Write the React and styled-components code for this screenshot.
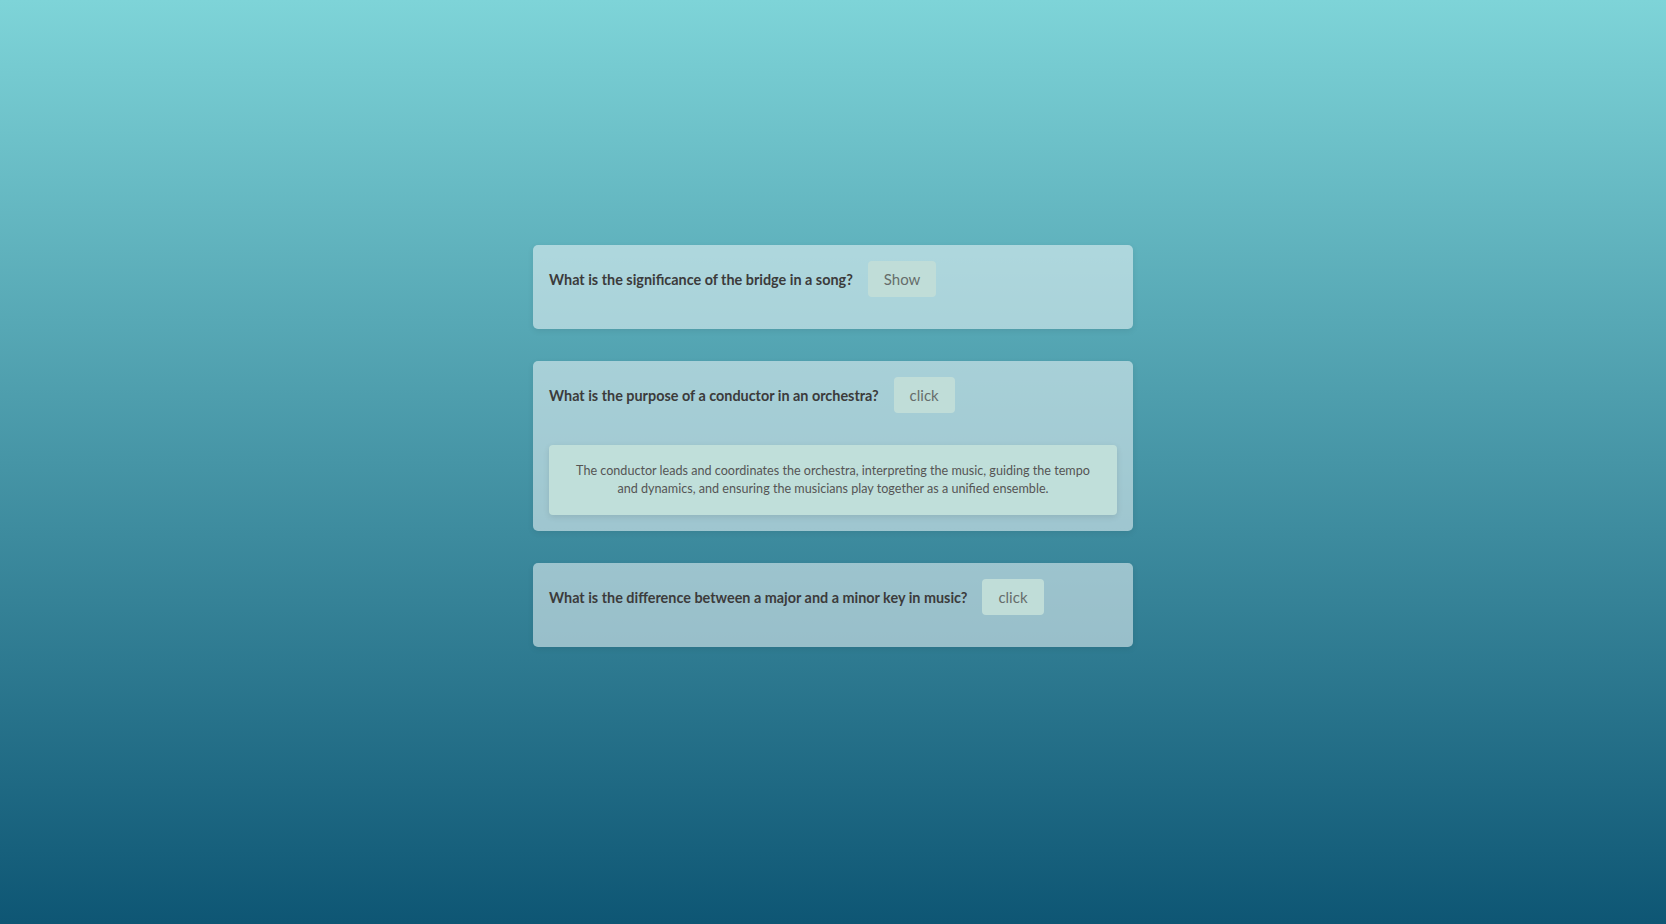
import styled, { createGlobalStyle } from 'styled-components'

const faqs = [
  {
    question: 'What is the significance of the bridge in a song?',
    label: 'Show',
    answer: null,
  },
  {
    question: 'What is the purpose of a conductor in an orchestra?',
    label: 'click',
    answer:
      'The conductor leads and coordinates the orchestra, interpreting the music, guiding the tempo and dynamics, and ensuring the musicians play together as a unified ensemble.',
  },
  {
    question: 'What is the difference between a major and a minor key in music?',
    label: 'click',
    answer: null,
  },
]

const App = () => {
  return (
    <>
      <GlobalStyle />
      <Page>
        <List>
          {faqs.map((item) => (
            <Card key={item.question}>
              <Row>
                <Question>{item.question}</Question>
                <Toggle>{item.label}</Toggle>
              </Row>
              {item.answer && <Answer>{item.answer}</Answer>}
            </Card>
          ))}
        </List>
      </Page>
    </>
  )
}
export default App

const GlobalStyle = createGlobalStyle`
  * {
    box-sizing: border-box;
  }

  body {
    margin: 0;
    font-family: 'Lato', 'Open Sans', sans-serif;
  }
`

const Page = styled.main`
  min-height: 100vh;
  display: flex;
  justify-content: center;
  align-items: center;
  background: linear-gradient(to bottom, #7ed4d8 0%, #0e5674 100%);
`

const List = styled.div`
  width: 600px;
  display: flex;
  flex-direction: column;
  gap: 32px;
  margin-top: -32px;
`

const Card = styled.section`
  display: flex;
  flex-direction: column;
  padding: 16px;
  background: rgba(238, 246, 247, 0.55);
  border-radius: 5px;
  box-shadow: 0 2px 6px rgba(0, 0, 0, 0.08);
`

const Row = styled.div`
  display: flex;
  align-items: center;
  gap: 15px;
  margin-bottom: 16px;
`

const Question = styled.h3`
  margin: 0;
  font-size: 14.4px;
  font-weight: 700;
  color: #3b3b3b;
`

const Toggle = styled.button`
  height: 36px;
  padding: 0 16px;
  border: none;
  border-radius: 4px;
  background: #c0ddd8;
  color: #666d6b;
  font-family: inherit;
  font-size: 15px;
  cursor: pointer;
`

const Answer = styled.p`
  margin: 16px 0 0;
  padding: 17px 16px;
  background: #c0dfda;
  border-radius: 4px;
  box-shadow: 0 2px 6px rgba(0, 0, 0, 0.1);
  text-align: center;
  font-size: 12.6px;
  line-height: 18px;
  color: #555;
`
